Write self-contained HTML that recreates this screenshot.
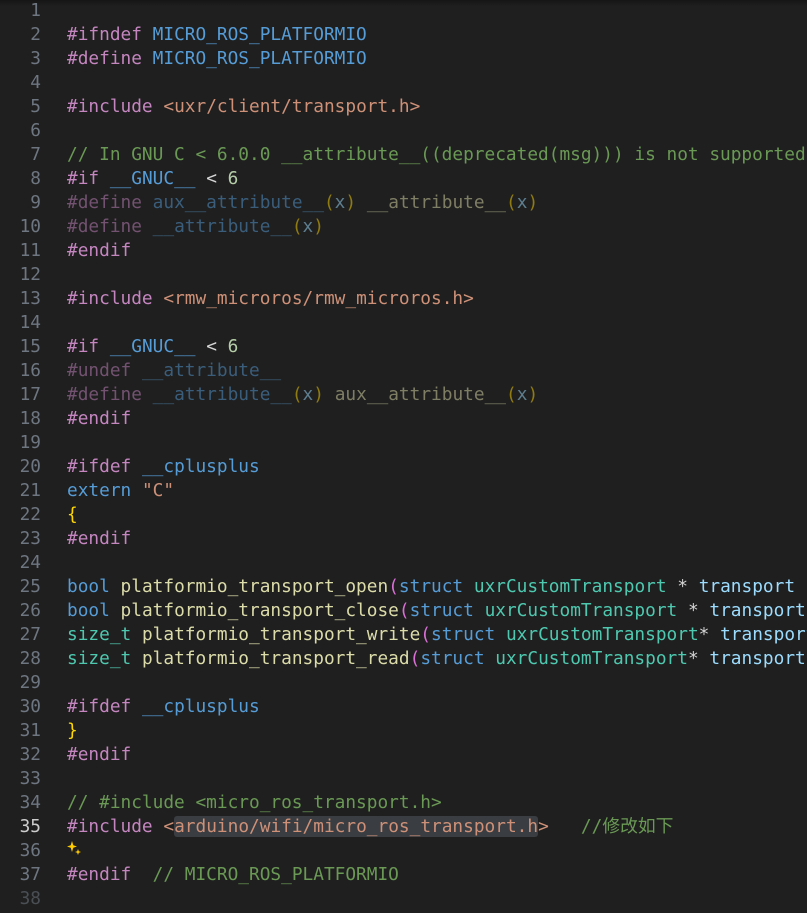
<!DOCTYPE html>
<html><head><meta charset="utf-8"><style>
html,body{margin:0;padding:0;background:#1f1f1f;width:807px;height:913px;overflow:hidden}
body{position:relative;font-family:"DejaVu Sans Mono","Liberation Mono","Noto Sans CJK SC",monospace;font-size:17.8px;}
.shadow{position:absolute;left:0;top:0;width:807px;height:6px;background:linear-gradient(#151515,rgba(31,31,31,0));}
.l{position:absolute;left:0;height:24px;line-height:24px;white-space:pre;width:807px}
.n{position:absolute;right:766px;color:#6e7681;text-align:right}
.c{position:absolute;left:67px;color:#d4d4d4}
.d{color:#c586c0}.m{color:#569cd6}.s{color:#ce9178}.cm{color:#6a9955}.nu{color:#b5cea8}
.f{color:#dcdcaa}.t{color:#4ec9b0}.v{color:#9cdcfe}.p{color:#da70d6}.y{color:#ffd700}.w{color:#d4d4d4}
.dim{opacity:.5}
.hl{background:#3a3d41;border-radius:3px}
</style></head><body>
<div class="shadow"></div>
<div class="l" style="top:-1px"><span class="n">1</span></div>
<div class="l" style="top:23px"><span class="n">2</span><span class="c"><span class="d">#ifndef</span> <span class="m">MICRO_ROS_PLATFORMIO</span></span></div>
<div class="l" style="top:47px"><span class="n">3</span><span class="c"><span class="d">#define</span> <span class="m">MICRO_ROS_PLATFORMIO</span></span></div>
<div class="l" style="top:71px"><span class="n">4</span></div>
<div class="l" style="top:95px"><span class="n">5</span><span class="c"><span class="d">#include</span> <span class="s">&lt;uxr/client/transport.h&gt;</span></span></div>
<div class="l" style="top:119px"><span class="n">6</span></div>
<div class="l" style="top:143px"><span class="n">7</span><span class="c"><span class="cm">// In GNU C &lt; 6.0.0 __attribute__((deprecated(msg))) is not supported</span></span></div>
<div class="l" style="top:167px"><span class="n">8</span><span class="c"><span class="d">#if</span> <span class="m">__GNUC__</span> &lt; <span class="nu">6</span></span></div>
<div class="l" style="top:191px"><span class="n">9</span><span class="c dim"><span class="d">#define</span> <span class="m">aux__attribute__</span><span class="y">(</span><span class="v">x</span><span class="y">)</span> <span class="f">__attribute__</span><span class="y">(</span><span class="v">x</span><span class="y">)</span></span></div>
<div class="l" style="top:215px"><span class="n">10</span><span class="c dim"><span class="d">#define</span> <span class="m">__attribute__</span><span class="y">(</span><span class="v">x</span><span class="y">)</span></span></div>
<div class="l" style="top:239px"><span class="n">11</span><span class="c"><span class="d">#endif</span></span></div>
<div class="l" style="top:263px"><span class="n">12</span></div>
<div class="l" style="top:287px"><span class="n">13</span><span class="c"><span class="d">#include</span> <span class="s">&lt;rmw_microros/rmw_microros.h&gt;</span></span></div>
<div class="l" style="top:311px"><span class="n">14</span></div>
<div class="l" style="top:335px"><span class="n">15</span><span class="c"><span class="d">#if</span> <span class="m">__GNUC__</span> &lt; <span class="nu">6</span></span></div>
<div class="l" style="top:359px"><span class="n">16</span><span class="c dim"><span class="d">#undef</span> <span class="m">__attribute__</span></span></div>
<div class="l" style="top:383px"><span class="n">17</span><span class="c dim"><span class="d">#define</span> <span class="m">__attribute__</span><span class="y">(</span><span class="v">x</span><span class="y">)</span> <span class="f">aux__attribute__</span><span class="y">(</span><span class="v">x</span><span class="y">)</span></span></div>
<div class="l" style="top:407px"><span class="n">18</span><span class="c"><span class="d">#endif</span></span></div>
<div class="l" style="top:431px"><span class="n">19</span></div>
<div class="l" style="top:455px"><span class="n">20</span><span class="c"><span class="d">#ifdef</span> <span class="m">__cplusplus</span></span></div>
<div class="l" style="top:479px"><span class="n">21</span><span class="c"><span class="m">extern</span> <span class="s">"C"</span></span></div>
<div class="l" style="top:503px"><span class="n">22</span><span class="c"><span class="y">{</span></span></div>
<div class="l" style="top:527px"><span class="n">23</span><span class="c"><span class="d">#endif</span></span></div>
<div class="l" style="top:551px"><span class="n">24</span></div>
<div class="l" style="top:575px"><span class="n">25</span><span class="c"><span class="m">bool</span> <span class="f">platformio_transport_open</span><span class="p">(</span><span class="m">struct</span> <span class="t">uxrCustomTransport</span> * <span class="v">transport</span></span></div>
<div class="l" style="top:599px"><span class="n">26</span><span class="c"><span class="m">bool</span> <span class="f">platformio_transport_close</span><span class="p">(</span><span class="m">struct</span> <span class="t">uxrCustomTransport</span> * <span class="v">transport</span></span></div>
<div class="l" style="top:623px"><span class="n">27</span><span class="c"><span class="t">size_t</span> <span class="f">platformio_transport_write</span><span class="p">(</span><span class="m">struct</span> <span class="t">uxrCustomTransport</span>* <span class="v">transport</span></span></div>
<div class="l" style="top:647px"><span class="n">28</span><span class="c"><span class="t">size_t</span> <span class="f">platformio_transport_read</span><span class="p">(</span><span class="m">struct</span> <span class="t">uxrCustomTransport</span>* <span class="v">transport</span></span></div>
<div class="l" style="top:671px"><span class="n">29</span></div>
<div class="l" style="top:695px"><span class="n">30</span><span class="c"><span class="d">#ifdef</span> <span class="m">__cplusplus</span></span></div>
<div class="l" style="top:719px"><span class="n">31</span><span class="c"><span class="y">}</span></span></div>
<div class="l" style="top:743px"><span class="n">32</span><span class="c"><span class="d">#endif</span></span></div>
<div class="l" style="top:767px"><span class="n">33</span></div>
<div class="l" style="top:791px"><span class="n">34</span><span class="c"><span class="cm">// #include &lt;micro_ros_transport.h&gt;</span></span></div>
<div class="l" style="top:815px"><span class="n" style="color:#cccccc">35</span><span class="c"><span class="d">#include</span> <span class="s">&lt;<span class="hl">arduino/wifi/micro_ros_transport.h</span>&gt;</span>   <span class="cm">//修改如下</span></span></div>
<div class="l" style="top:839px"><span class="n">36</span><span class="c"><svg width="16" height="18" viewBox="0 0 16 18" style="vertical-align:-2px"><path d="M5 1 L6.3 5.2 L10 6.5 L6.3 7.8 L5 12 L3.7 7.8 L0 6.5 L3.7 5.2 Z" fill="#ffcc00"/><path d="M11 9 L11.8 11.2 L14 12 L11.8 12.8 L11 15 L10.2 12.8 L8 12 L10.2 11.2 Z" fill="#ffcc00"/></svg></span></div>
<div class="l" style="top:863px"><span class="n">37</span><span class="c"><span class="d">#endif</span>  <span class="cm">// MICRO_ROS_PLATFORMIO</span></span></div>
<div class="l" style="top:887px"><span class="n" style="color:#4a4f55">38</span></div>
</body></html>
